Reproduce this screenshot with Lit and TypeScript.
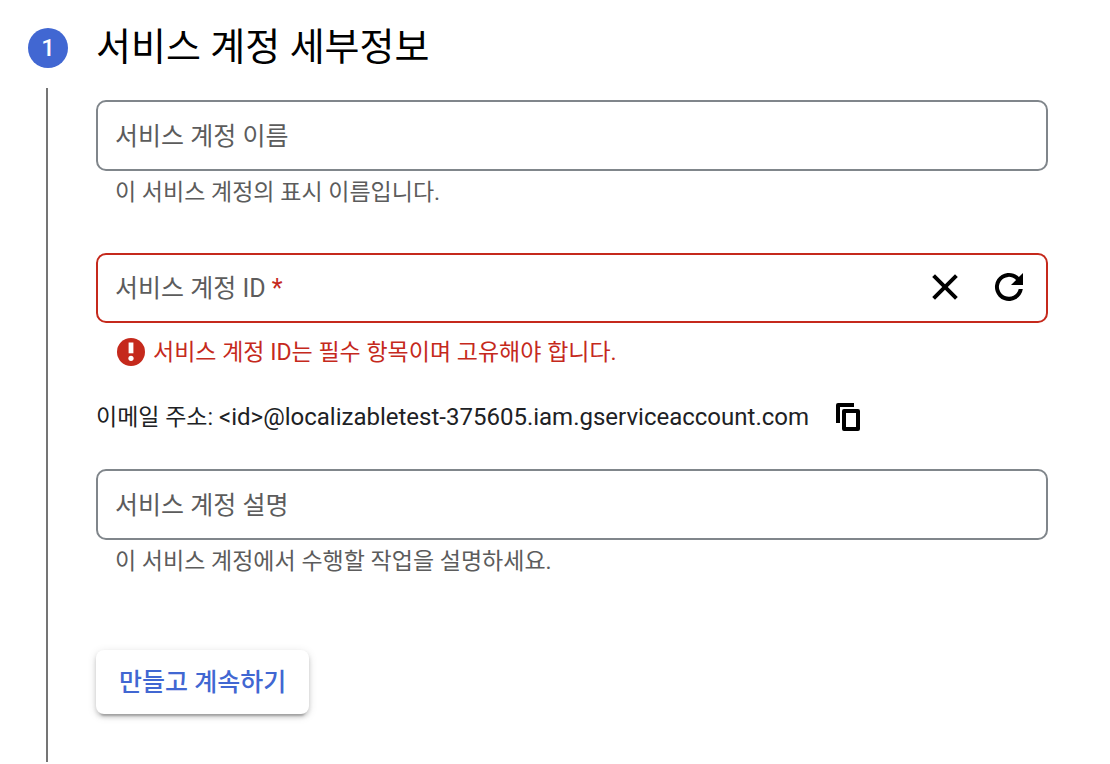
import { LitElement, html, css, nothing } from "lit";
import { customElement, property } from "lit/decorators.js";

@customElement("outlined-field")
class OutlinedField extends LitElement {
  @property() label = "";
  @property() hint = "";
  @property() error = "";
  @property({ type: Boolean }) required = false;

  static styles = css`
    :host {
      display: block;
    }
    .box {
      display: grid;
      grid-template-columns: 1fr auto;
      align-items: center;
      box-sizing: border-box;
      height: 71px;
      border: 2px solid #80868b;
      border-radius: 10px;
      background: #fff;
    }
    .box.invalid {
      height: 70px;
      border-color: #c5291c;
    }
    label,
    input {
      grid-row: 1;
      grid-column: 1;
      font: inherit;
      font-size: 25px;
      line-height: 32px;
    }
    label {
      z-index: 1;
      padding: 2px 17px 0;
      color: #5c5c5c;
      pointer-events: none;
    }
    input {
      box-sizing: border-box;
      width: 100%;
      height: 100%;
      min-width: 0;
      padding: 2px 17px 0;
      border: 0;
      border-radius: 8px;
      outline: none;
      background: transparent;
      color: #202124;
    }
    .star {
      color: #c5291c;
    }
    .hint,
    .error {
      margin: 0;
      padding: 0 19px;
      font-size: 23px;
      line-height: 32px;
      color: #5c5c5c;
    }
    .hint {
      padding-top: 6px;
    }
    .error {
      display: flex;
      align-items: flex-start;
      gap: 7px;
      padding: 14px 20px 0;
      color: #c5291c;
    }
    .error svg {
      flex: none;
      width: 30px;
      height: 30px;
    }
  `;

  render() {
    return html`
      <div class="box ${this.error ? "invalid" : ""}">
        <label for="control"
          >${this.label}${this.required
            ? html` <span class="star">*</span>`
            : nothing}</label
        >
        <input
          id="control"
          type="text"
          ?required=${this.required}
          aria-describedby="note"
        />
        <slot></slot>
      </div>
      ${this.error
        ? html`<p class="error" id="note">
            <svg viewBox="0 0 30 30" aria-hidden="true">
              <circle cx="15" cy="15" r="14" fill="#c5291c" />
              <path d="M12.6 5.5h4.8v10.8h-4.8z" fill="#fff" />
              <circle cx="15" cy="21.3" r="2.6" fill="#fff" />
            </svg>
            <span>${this.error}</span>
          </p>`
        : html`<p class="hint" id="note">${this.hint}</p>`}
    `;
  }
}

@customElement("app-root")
class AppRoot extends LitElement {
  static styles = css`
    :host {
      display: block;
      background: #fff;
      color: #202124;
      font-family: Roboto, "Noto Sans CJK KR", sans-serif;
    }
    .step {
      display: grid;
      grid-template-columns: 40px 1fr;
      column-gap: 28px;
      box-sizing: border-box;
      min-height: 100vh;
      padding: 20px 62px 2px 28px;
    }
    .rail {
      display: flex;
      flex-direction: column;
      align-items: center;
      padding-top: 8px;
    }
    .badge {
      width: 40px;
      height: 40px;
      border-radius: 50%;
      background: #4167d2;
      color: #fff;
      font-size: 24px;
      font-weight: 500;
      line-height: 40px;
      text-align: center;
    }
    .line {
      flex: 1;
      width: 2px;
      margin: 20px 2px 0 0;
      background: #757575;
    }
    h2 {
      margin: 0;
      color: #000;
      font-size: 38px;
      font-weight: 400;
      line-height: 54px;
    }
    form {
      display: flex;
      flex-direction: column;
      padding: 26px 0 40px;
    }
    .id-field {
      margin-top: 44px;
    }
    .actions {
      display: flex;
      gap: 24px;
      padding: 0 17px 2px 0;
    }
    .icon {
      display: flex;
      padding: 0;
      border: 0;
      background: none;
      color: #000;
      cursor: pointer;
    }
    .icon svg {
      width: 40px;
      height: 40px;
      fill: currentColor;
    }
    .email {
      display: flex;
      align-items: center;
      gap: 19px;
      margin: 27px 0 32px;
      font-size: 24px;
      line-height: 40px;
    }
    .email p {
      margin: 0;
      padding-top: 2px;
      line-height: 38px;
    }
    .caption {
      font-size: 23px;
    }
    .submit {
      align-self: flex-start;
      height: 64px;
      margin-top: 72px;
      padding: 0 23px 4px;
      border: 0;
      border-radius: 8px;
      background: #fff;
      color: #4167d2;
      box-shadow:
        0 6px 2px -4px rgba(0, 0, 0, 0.2),
        0 3px 4px 0 rgba(0, 0, 0, 0.16),
        0 2px 10px 0 rgba(0, 0, 0, 0.12);
      font: inherit;
      font-size: 25px;
      font-weight: 500;
      cursor: pointer;
    }
  `;

  render() {
    return html`
      <section class="step">
        <div class="rail">
          <div class="badge">1</div>
          <div class="line"></div>
        </div>
        <div>
          <h2>서비스 계정 세부정보</h2>
          <form @submit=${(e: Event) => e.preventDefault()}>
            <outlined-field
              label="서비스 계정 이름"
              hint="이 서비스 계정의 표시 이름입니다."
            ></outlined-field>
            <outlined-field
              class="id-field"
              label="서비스 계정 ID"
              error="서비스 계정 ID는 필수 항목이며 고유해야 합니다."
              required
            >
              <div class="actions">
                <button class="icon" type="button" aria-label="지우기">
                  <svg viewBox="0 0 40 40">
                    <path
                      d="M7.2 10l2.8-2.8L20 17.2 30 7.2l2.8 2.8L22.8 20l10 10-2.8 2.8L20 22.8 10 32.8 7.2 30l10-10z"
                    />
                  </svg>
                </button>
                <button class="icon" type="button" aria-label="새로고침">
                  <svg viewBox="0 0 40 40">
                    <path
                      d="M29.9 10.1A14 14 0 1 0 33.8 22h-4.1a10 10 0 1 1-2.6-9.1L22 18H34V6z"
                    />
                  </svg>
                </button>
              </div>
            </outlined-field>
            <div class="email">
              <p>
                <span class="caption">이메일 주소:</span>
                &lt;id&gt;@localizabletest-375605.iam.gserviceaccount.com
              </p>
              <button class="icon" type="button" aria-label="복사">
                <svg viewBox="0 0 40 40">
                  <path
                    d="M26 6H10a2 2 0 0 0-2 2v18h4V10h14zM30 12H16a2 2 0 0 0-2 2v18a2 2 0 0 0 2 2h14a2 2 0 0 0 2-2V14a2 2 0 0 0-2-2zm-2 18H18V16h10z"
                  />
                </svg>
              </button>
            </div>
            <outlined-field
              label="서비스 계정 설명"
              hint="이 서비스 계정에서 수행할 작업을 설명하세요."
            ></outlined-field>
            <button class="submit" type="submit">만들고 계속하기</button>
          </form>
        </div>
      </section>
    `;
  }
}
